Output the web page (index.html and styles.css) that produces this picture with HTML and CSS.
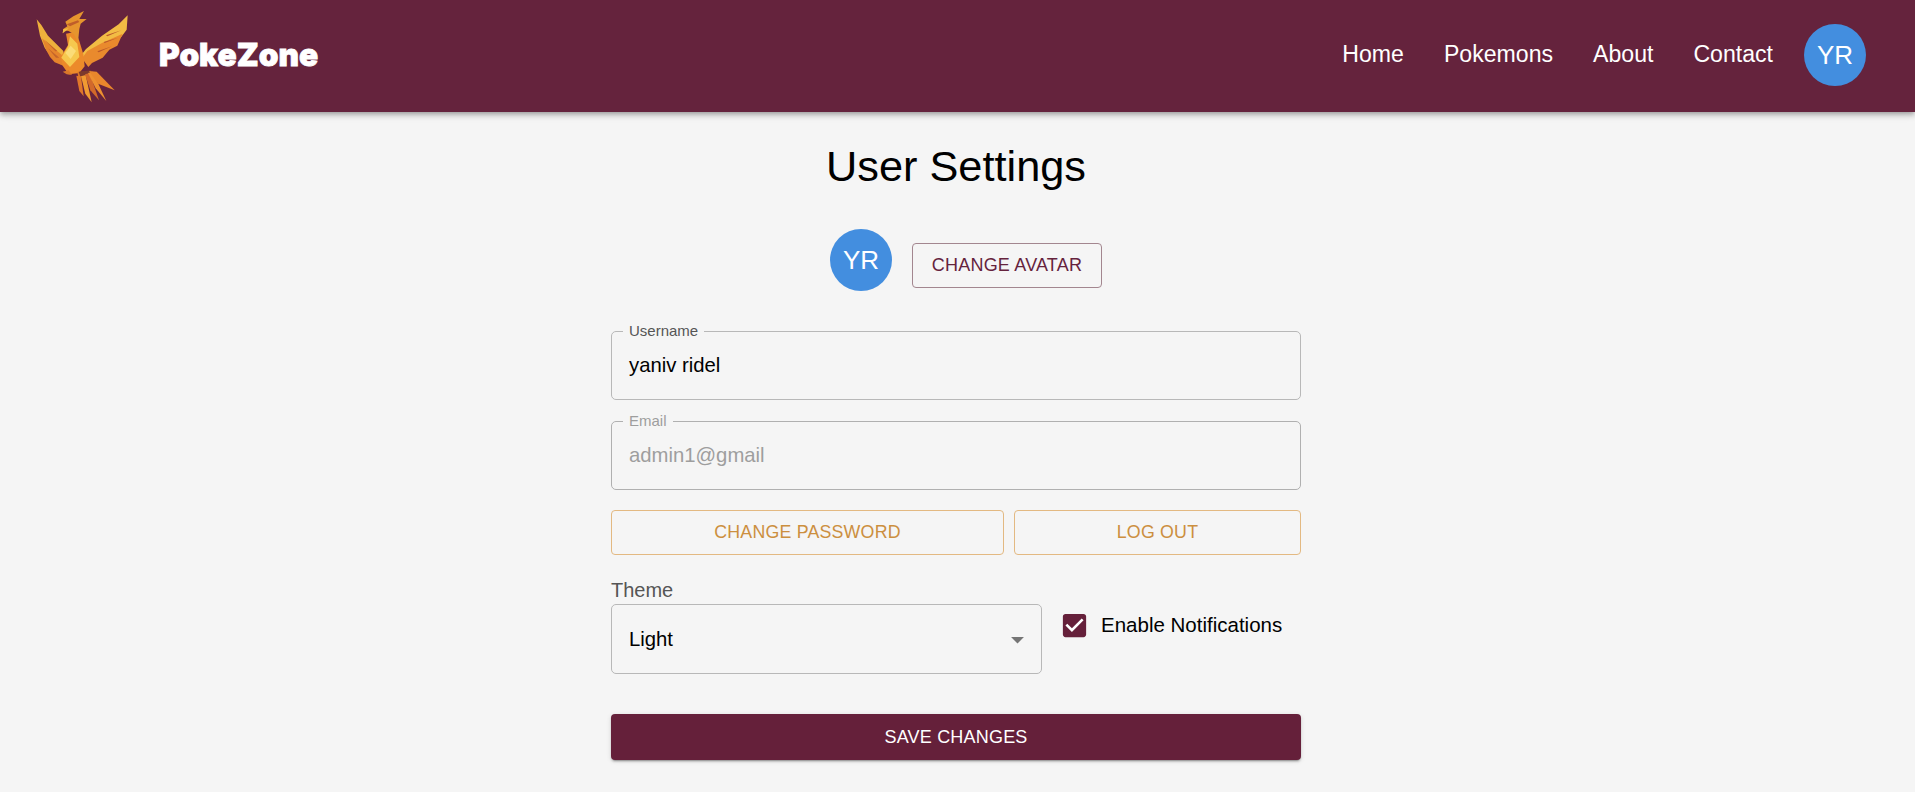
FILE: index.html
```html
<!DOCTYPE html>
<html lang="en">
<head>
<meta charset="utf-8">
<title>PokeZone - User Settings</title>
<link rel="stylesheet" href="styles.css">
</head>
<body>
<header class="topbar">
  <div class="brand">
    <svg class="logo" viewBox="0 0 360 330" aria-hidden="true">
      <path fill="#eeb03c" d="M50 55 64 72 84 104 130 150 134 184 122 190 92 166 74 140 60 104z"/>
      <path fill="#e5842c" d="M66 112 130 166 130 194 104 184 90 168 78 146z"/>
      <path fill="#c4642b" d="M74 116 112 150 106 151zM84 142 118 170 108 170z"/>
      <path fill="#f2bc44" d="M323 43 320 86 302 110 244 132 198 174 182 164 198 144 246 104 296 70z"/>
      <path fill="#e98a2d" d="M308 98 292 134 268 146 248 170 216 186 205 198 186 172 202 150 246 126z"/>
      <path fill="#b9582a" d="M304 88 262 106 258 103zM294 110 254 126 251 123zM276 136 236 154 232 151z"/>
      <path fill="#ec8a2a" d="M138 98 168 92 178 120 190 160 194 196 178 216 146 220 128 194 122 168 144 132z"/>
      <path fill="#f6c84e" d="M150 106 172 128 178 168 150 198 124 170 144 136z"/>
      <path fill="#fbdc78" d="M152 134 168 150 152 174 136 156z"/>
      <path fill="#e6952e" d="M128 97 130 84 142 76 136 62 160 46 192 30 178 54 200 54 182 68 178 84 174 124 162 100 146 90 134 88z"/>
      <path fill="#bf5e2a" d="M140 70 174 58 178 63 150 76z"/>
      <path fill="#f2bb42" d="M128 97 130 84 146 82 140 88z"/>
      <path fill="#d9772a" d="M128 212 146 208 156 222 140 220zM172 214 192 212 194 228 176 232z"/>
      <path fill="#7c3a2c" d="M176 212 214 208 208 234 184 236z"/>
      <path fill="#e0772a" d="M169 224 183 226 191 286 178 270z"/>
      <path fill="#f09a32" d="M183 226 197 222 215 304 196 278z"/>
      <path fill="#d2692a" d="M195 220 209 216 237 298 211 268z"/>
      <path fill="#ed9030" d="M204 216 218 212 259 300 227 262z"/>
      <path fill="#e8872c" d="M207 210 230 212 284 268 234 248z"/>
    </svg>
    <span class="wordmark">PokeZone</span>
  </div>
  <nav class="nav">
    <a class="nav-link">Home</a>
    <a class="nav-link">Pokemons</a>
    <a class="nav-link">About</a>
    <a class="nav-link">Contact</a>
    <span class="avatar nav-avatar">YR</span>
  </nav>
</header>
<main class="page">
  <h1 class="title">User Settings</h1>
  <div class="avatar-row">
    <span class="avatar">YR</span>
    <button class="btn btn-plum">CHANGE AVATAR</button>
  </div>
  <form class="form">
    <fieldset class="field">
      <legend class="field-label">Username</legend>
      <div class="field-value">yaniv ridel</div>
    </fieldset>
    <fieldset class="field field-disabled">
      <legend class="field-label">Email</legend>
      <div class="field-value">admin1@gmail</div>
    </fieldset>
    <div class="btn-row">
      <button type="button" class="btn btn-amber btn-wide">CHANGE PASSWORD</button>
      <button type="button" class="btn btn-amber btn-narrow">LOG OUT</button>
    </div>
    <div class="prefs">
      <div class="theme">
        <div class="theme-label">Theme</div>
        <div class="select">
          <span>Light</span>
          <svg class="arrow" viewBox="0 0 24 24" aria-hidden="true"><path d="M7 10l5 5 5-5z"/></svg>
        </div>
      </div>
      <label class="check">
        <svg class="check-icon" viewBox="0 0 24 24" aria-hidden="true">
          <rect class="check-bg" x="4" y="4" width="16" height="16"/>
          <path class="check-fg" d="M19 3H5c-1.11 0-2 .9-2 2v14c0 1.1.89 2 2 2h14c1.11 0 2-.9 2-2V5c0-1.1-.89-2-2-2zm-9 14l-5-5 1.41-1.41L10 14.17l7.59-7.59L19 8l-9 9z"/>
        </svg>
        <span>Enable Notifications</span>
      </label>
    </div>
    <button type="button" class="btn btn-save">SAVE CHANGES</button>
  </form>
</main>
</body>
</html>
```
FILE: styles.css
```css
* { box-sizing: border-box; }
html, body { margin: 0; height: 100%; }
body {
  background: #f5f5f5;
  color: #000;
  font-family: "Liberation Sans", Arial, sans-serif;
  overflow: hidden;
}
.topbar {
  height: 112px;
  background: #65233d;
  display: flex;
  align-items: center;
  justify-content: space-between;
  padding: 0 49px 0 20px;
  box-shadow: 0 2px 4px -1px rgba(0,0,0,.2), 0 4px 5px 0 rgba(0,0,0,.14), 0 1px 10px 0 rgba(0,0,0,.12);
}
.brand { display: flex; align-items: center; gap: 19px; }
.logo { width: 120px; height: 110px; display: block; }
.wordmark {
  color: #fff;
  font-family: Inter, sans-serif;
  font-weight: 900;
  font-size: 31.6px;
  -webkit-text-stroke: .8px #fff;
  margin-top: -4px;
}
.nav { display: flex; align-items: center; gap: 40px; }
.nav-link { color: #fff; font-size: 23.1px; margin-top: -3px; }
.avatar {
  width: 62px;
  height: 62px;
  border-radius: 50%;
  background: #438edf;
  color: #fff;
  font-size: 26px;
  display: flex;
  align-items: center;
  justify-content: center;
  flex: none;
}
.nav-avatar { margin-left: -9px; margin-top: -2px; }
.page { display: flex; flex-direction: column; align-items: center; width: 693px; padding-right: 3px; margin: 0 auto; }
.title { font-size: 43.3px; font-weight: 400; line-height: 50px; margin: 29px 0 0; }
.avatar-row { display: flex; align-items: center; gap: 20px; margin: 38px 0 0 20px; }
.avatar-row .btn { margin-top: 11px; }
.btn {
  font-family: inherit;
  font-size: 18px;
  letter-spacing: .2px;
  height: 45px;
  border-radius: 4px;
  background: transparent;
  padding: 0;
  cursor: pointer;
}
.btn-plum { color: #65233d; border: 1px solid #a3868f; width: 190px; }
.form { width: 690px; display: flex; flex-direction: column; margin-top: 33px; }
.field {
  margin: 0 0 14px;
  padding: 0 11px;
  height: 76px;
  border: 1px solid #b8b8b8;
  border-radius: 5px;
  min-width: 0;
}
.field-label { font-size: 15px; line-height: 14px; padding: 0 6px; color: #555; }
.field-value { font-size: 20.3px; line-height: 24px; padding: 15px 6px 0; }
.field-disabled { border-color: #b0b0b0; }
.field-disabled .field-label, .field-disabled .field-value { color: #9e9e9e; }
.btn-row { display: flex; gap: 10px; margin-top: 6px; }
.btn-amber { color: #cc8f3f; border: 1px solid #e3b982; font-size: 17.8px; }
.btn-wide { width: 393px; }
.btn-narrow { flex: 1; }
.prefs { display: flex; align-items: center; gap: 20px; margin-top: 21px; }
.theme { width: 431px; flex: none; }
.theme-label { color: #555; font-size: 20px; line-height: 28px; }
.select {
  height: 70px;
  border: 1px solid #b8b8b8;
  border-radius: 5px;
  padding: 0 8px 0 17px;
  font-size: 20.3px;
  display: flex;
  align-items: center;
  justify-content: space-between;
}
.arrow { width: 31px; height: 31px; fill: #757575; }
.check { display: flex; align-items: center; gap: 11px; font-size: 20.5px; margin: 0 0 0 -3px; white-space: nowrap; }
.check-icon { width: 31px; height: 31px; flex: none; }
.check-bg { fill: #fff; }
.check-fg { fill: #65203a; }
.btn-save {
  margin-top: 40px;
  height: 46px;
  width: 690px;
  border: 0;
  background: #65203a;
  color: #fff;
  box-shadow: 0 3px 1px -2px rgba(0,0,0,.2), 0 2px 2px 0 rgba(0,0,0,.14), 0 1px 5px 0 rgba(0,0,0,.12);
}
```
